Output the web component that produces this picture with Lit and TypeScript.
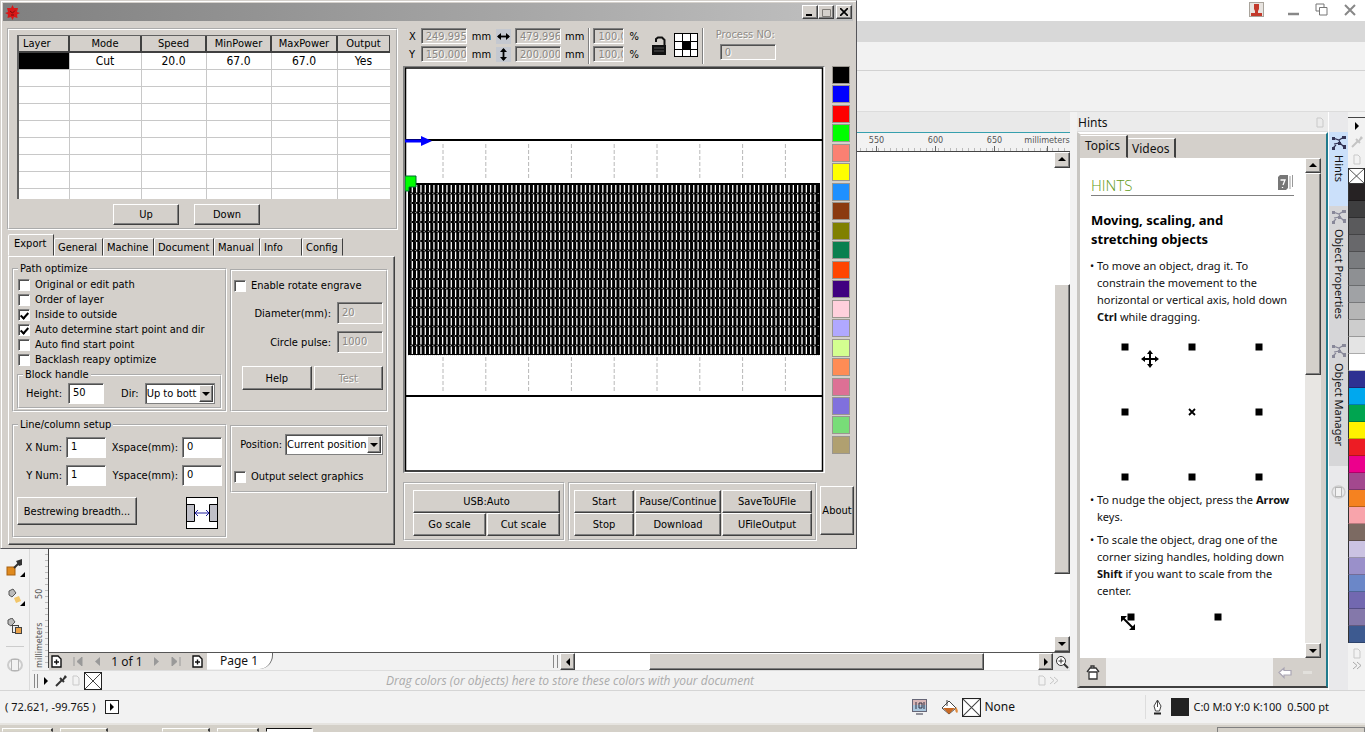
import { LitElement, html, css, svg } from "lit";
import { customElement } from "lit/decorators.js";

/* ---------- shared control styles (classic grey 3D look) ---------- */
const classic = css`
  * { box-sizing: border-box; }
  button, input, select { font: inherit; color: inherit; margin: 0; padding: 0; border-radius: 0; outline: none; }
  button { cursor: default; }
  .btn {
    background: #d4d0cb; border: 1px solid; border-color: #fff #404040 #404040 #fff;
    box-shadow: inset -1px -1px 0 #808080; display: flex; align-items: center; justify-content: center;
    white-space: nowrap;
  }
  svg { display: block; flex: none; }
`;

const arrow = (dir: "up" | "down" | "left" | "right") => {
  const d = { up: "M0 5L4 1L8 5Z", down: "M0 2L4 6L8 2Z", left: "M6 0L2 4L6 8Z", right: "M2 0L6 4L2 8Z" }[dir];
  return html`<svg width="8" height="8" viewBox="0 0 8 8"><path d=${d} fill="#000" /></svg>`;
};

const crossBox = (w: number, h: number) => html`<svg width=${w} height=${h} viewBox="0 0 18 18" preserveAspectRatio="none">
  <rect x=".5" y=".5" width="17" height="17" fill="#fff" stroke="#222" /><path d="M1 1L17 17M17 1L1 17" stroke="#444" /></svg>`;

const dropper = (c = "#333") => html`<svg width="14" height="14" viewBox="0 0 14 14">
  <path d="M2 12L8 6" stroke=${c} stroke-width="2" /><path d="M6 4L10 8" stroke=${c} stroke-width="2" />
  <path d="M8 6L11 1L13 3L9 7Z" fill=${c} /></svg>`;

const page = html`<svg width="8" height="11" viewBox="0 0 8 11"><path d="M1 1H5L7 3V10H1Z" fill="none" stroke="#c9c9c9" /></svg>`;

const addPage = html`<svg width="11" height="13" viewBox="0 0 11 13">
  <path d="M1 1H7L10 4V12H1Z" fill="#fff" stroke="#111" stroke-width="1.4" /><path d="M3 7H8M5.5 4.5V9.5" stroke="#111" stroke-width="1.4" /></svg>`;

const nodes = (c: string) => html`<svg width="16" height="16" viewBox="0 0 16 16">
  <path d="M2 3L8 5L13 2M3 9L9 8L13 12M8 5L9 8M2 13L5 10" fill="none" stroke=${c} stroke-width="1.2" />
  <path d="M1 2h3v3h-3zM11 1h4v3h-4zM7 7h3v3h-3zM12 10h3v4h-3zM1 12h3v3h-3z" fill=${c} /></svg>`;

/* ---------- laser engraver dialog ---------- */
@customElement("laser-dialog")
class LaserDialog extends LitElement {
  static styles = [classic, css`
    :host {
      display: block; width: 857px; background: #d4d0cb; color: #000;
      font: 11px/13px "DejaVu Sans Condensed", "DejaVu Sans", sans-serif;
      border: 1px solid; border-color: #d4d0cb #55555a #55555a #d4d0cb; padding: 2px 3px 3px 2px; box-shadow: inset 1px 1px 0 #fff;
    }
    .title { height: 18px; background: linear-gradient(90deg, #808080, #c0c0c0); display: flex; align-items: center; padding: 0 1px 0 2px; margin-bottom: 7px; }
    .title .logo { margin-right: auto; }
    .title .btn { width: 16px; height: 14px; }
    .title .close { margin-left: 2px; }
    .cols { display: grid; grid-template-columns: 391px 1fr; gap: 5px; padding-left: 4px; }
    fieldset { border: 2px groove #fff; margin: 0; padding: 0; min-width: 0; }
    legend { padding: 0 2px; margin-left: 4px; height: 12px; line-height: 12px; }

    .layers { height: 202px; padding: 5px 6px 3px 8px; }
    .grid { height: 164px; overflow: hidden; background: #fff; border-left: 2px solid #606060; border-top: 1px solid #606060; }
    table { border-collapse: collapse; table-layout: fixed; width: 371px; }
    th { height: 16px; background: #d4d0cb; border: solid #404040; border-width: 0 2px 2px 0; font-weight: normal; padding: 0; line-height: 14px; vertical-align: bottom; }
    th:first-child { text-align: left; padding-left: 4px; }
    td { height: 17px; border: solid #c8c8c8; border-width: 0 1px 1px 0; padding: 0; text-align: center; font-size: 12px; line-height: 14px; }
    td.ink { background: #000; }
    .move { display: flex; justify-content: center; gap: 15px; margin: 5px 34px 0 0; }
    .move .btn { width: 66px; height: 21px; }

    .tabs { display: flex; align-items: flex-end; height: 25px; margin-top: 1px; padding-left: 1px; }
    .tab { height: 18px; border: 1px solid; border-color: #fff #404040 transparent #fff; background: #d4d0cb; border-top-left-radius: 2px; text-align: left; padding: 0 0 0 3px; white-space: nowrap; }
    .tab.on { height: 22px; padding-bottom: 3px; padding-left: 5px; }
    .sheet { border: 1px solid; border-color: #fff #404040 #404040 #fff; box-shadow: inset -1px -1px 0 #808080; height: 289px;
      display: grid; grid-template-columns: 215px 158px; grid-template-rows: 149px 1fr; gap: 7px 3px; padding: 6px 7px 6px 3px; width: 387px; margin-left: 1px; }
    .sheet > fieldset { padding: 0; }
    .side { margin-top: 6px; }

    .check { display: flex; align-items: center; gap: 5px; height: 15px; white-space: nowrap; }
    .check input { appearance: none; width: 12px; height: 12px; background: #fff; border: 1px solid; border-color: #808080 #fff #fff #808080; box-shadow: inset 1px 1px 0 #505050; position: relative; flex: none; }
    .check input:checked::after { content: ""; position: absolute; left: 3px; top: 1px; width: 3px; height: 6px; border: solid #000; border-width: 0 2px 2px 0; transform: rotate(42deg); }
    .list { padding: 2px 0 0 4px; }

    .field { background: #fff; border: 1px solid; border-color: #808080 #fff #fff #808080; box-shadow: inset 1px 1px 0 #505050; padding: 0 0 2px 4px; height: 21px; min-width: 0; }
    .field:disabled { background: #d4d0cb; color: #8b8884; text-shadow: 1px 1px 0 #fff; opacity: 1; }
    .row { display: flex; align-items: center; gap: 6px; }
    .pick { position: relative; display: block; height: 21px; }
    .pick select { appearance: none; width: 100%; height: 100%; background: #fff; border: 1px solid #808080; box-shadow: inset 1px 1px 0 #505050; padding-left: 1px; }
    .pick .btn { position: absolute; right: 2px; top: 2px; bottom: 2px; width: 14px; pointer-events: none; }
    .block { margin: 2px 3px 0 3px; height: 40px; }
    .block .row { padding: 2px 0 0 7px; }
    .w36 { width: 36px; } .w70 { width: 70px; } .w46 { width: 46px; } .w31 { width: 31px; } .w98 { width: 98px; }
    .push { margin-left: 11px; }

    .rotate .list, .pos .list { padding: 7px 3px 0 2px; }
    .r { display: grid; grid-template-columns: 1fr 46px; gap: 6px; align-items: center; text-align: right; margin-top: 9px; }
    .r .field { height: 22px; }
    .r + .r { margin-top: 7px; }
    .two { display: grid; grid-template-columns: 1fr 1fr; gap: 2px; margin: 13px 0 0 8px; }
    .two .btn { height: 24px; }
    .dis { color: #908d88; text-shadow: 1px 1px 0 #fff; }
    .pos { height: 68px; }
    .pos .row { justify-content: flex-end; gap: 3px; }
    .pos .check { margin-top: 14px; }
    .nums { display: grid; grid-template-columns: 48px 40px 68px 40px; gap: 7px 4px; align-items: center; text-align: right; padding: 6px 0 0 0; justify-content: start; }
    .spread { display: flex; justify-content: space-between; padding: 11px 7px 0 3px; }
    .spread .btn { width: 120px; height: 28px; }

    .coords { display: flex; height: 38px; align-items: flex-start; padding-left: 6px; }
    .xy { display: grid; grid-template-columns: auto auto auto; gap: 2px 5px; align-items: center; }
    .xy.pct { grid-template-columns: auto auto; }
    .xy .field, .proc .field { height: 16px; padding-bottom: 0; }
    .sep { width: 2px; height: 36px; border-left: 1px solid #808080; border-right: 1px solid #fff; margin: 0 3px 0 4px; }
    .gap { margin-left: 5px; }
    .xy.gap { column-gap: 4px; }
    .icons { display: flex; gap: 6px; padding: 5px 0 0 12px; }
    .proc { padding-left: 9px; }
    .proc label { display: block; white-space: nowrap; margin-bottom: 3px; }
    .proc .field { width: 56px; margin-left: 4px; display: block; }
    .stage { display: flex; gap: 7px; }
    .view { width: 422px; height: 407px; border: 1px solid; border-color: #808080 #fff #fff #808080; border-left-width: 2px; background: #fff; }
    .inks { display: flex; flex-direction: column; justify-content: space-between; height: 388px; }
    .ink-btn { width: 18px; height: 18px; border: 1px solid #9a968f; }
    .cmds { display: flex; gap: 3px; margin-top: 9px; align-items: flex-start; }
    .cmds fieldset { height: 59px; padding: 6px 3px 0 8px; }
    .cmds .ctl { padding-left: 4px; }
    .usb { display: grid; grid-template-columns: 73px 73px; gap: 0 1px; }
    .run { display: grid; grid-template-columns: 60px 86px 90px; gap: 0 1px; }
    .cmds fieldset .btn { height: 23px; }
    .usb .wide { grid-column: 1 / 3; }
    .about { width: 34px; height: 49px; margin-top: 4px; }
  `];

  check(label: string, on = false) {
    return html`<label class="check"><input type="checkbox" ?checked=${on} />${label}</label>`;
  }

  render() {
    const heads = ["Layer", "Mode", "Speed", "MinPower", "MaxPower", "Output"];
    const widths = [50, 72, 65, 65, 66, 53];
    const tabs: [string, number][] = [["Export", 46], ["General", 49], ["Machine", 51], ["Document", 60], ["Manual", 46], ["Info", 42], ["Config", 41]];
    const inks = ["#000", "#00f", "#f00", "#0f0", "#fa8072", "#ff0", "#1e90ff", "#8b3a10", "#808000", "#0a8050", "#ff4500", "#400080", "#ffd0dc", "#b0a8ff", "#d4ff90", "#ff8c55", "#dd7095", "#8070dd", "#78dd78", "#b0a070"];
    return html`
      <div class="title">
        <svg class="logo" width="15" height="15" viewBox="0 0 15 15"><path d="M7.500 0L9 3L13 3L12 7L15 8L12 9.500L12.500 13L9 12L7.500 15L6 12L2.500 13L3 9.500L0 8L3 7L2 3L6 3Z" fill="#d81818" /><path d="M5 6L7.500 8L10 5.500M6 10L9 10" stroke="#7a0a0a" fill="none" /></svg>
        <button class="btn" aria-label="Minimize"><svg width="8" height="8"><path d="M0 7H6" stroke="#000" stroke-width="2" /></svg></button>
        <button class="btn" aria-label="Maximize"><svg width="9" height="9"><path d="M.5 1.500H8.500V8.500H.5Z" fill="none" stroke="#807d78" /></svg></button>
        <button class="btn close" aria-label="Close"><svg width="8" height="8"><path d="M0 0L8 8M8 0L0 8" stroke="#000" stroke-width="1.700" /></svg></button>
      </div>
      <div class="cols">
        <div>
          <fieldset class="layers">
            <div class="grid"><table>
              <colgroup>${widths.map(w => html`<col width=${w} />`)}</colgroup>
              <thead><tr>${heads.map(h => html`<th>${h}</th>`)}</tr></thead>
              <tbody>
                <tr><td class="ink"></td>${["Cut", "20.0", "67.0", "67.0", "Yes"].map(v => html`<td>${v}</td>`)}</tr>
                ${Array.from({ length: 8 }, () => html`<tr>${heads.map(() => html`<td></td>`)}</tr>`)}
              </tbody></table></div>
            <div class="move"><button class="btn">Up</button><button class="btn">Down</button></div>
          </fieldset>
          <div class="tabs" role="tablist">${tabs.map(([t, w], i) => html`<button role="tab" class="tab ${i ? "" : "on"}" style="width:${w}px">${t}</button>`)}</div>
          <div class="sheet">
            <fieldset><legend>Path optimize</legend>
              <div class="list">
                ${this.check("Original or edit path")}${this.check("Order of layer")}${this.check("Inside to outside", true)}
                ${this.check("Auto determine start point and dir", true)}${this.check("Auto find start point")}${this.check("Backlash reapy optimize")}
              </div>
              <fieldset class="block"><legend>Block handle</legend>
                <div class="row"><label for="bh">Height:</label><input class="field w36" id="bh" value="50" />
                  <label class="push" for="dir">Dir:</label>
                  <span class="pick w70"><select id="dir"><option>Up to bott</option></select><span class="btn">${arrow("down")}</span></span></div>
              </fieldset>
            </fieldset>
            <fieldset class="rotate side"><div class="list">${this.check("Enable rotate engrave")}
              <div class="r"><label for="dia">Diameter(mm):</label><input class="field" id="dia" value="20" disabled /></div>
              <div class="r"><label for="cp">Circle pulse:</label><input class="field" id="cp" value="1000" disabled /></div>
              <div class="two"><button class="btn">Help</button><button class="btn dis">Test</button></div></div>
            </fieldset>
            <fieldset><legend>Line/column setup</legend>
              <div class="nums">
                <label for="xn">X Num:</label><input class="field" id="xn" value="1" /><label for="xs">Xspace(mm):</label><input class="field" id="xs" value="0" />
                <label for="yn">Y Num:</label><input class="field" id="yn" value="1" /><label for="ys">Yspace(mm):</label><input class="field" id="ys" value="0" />
              </div>
              <div class="spread"><button class="btn">Bestrewing breadth...</button>
                <svg width="32" height="32" viewBox="0 0 32 32"><rect x=".5" y=".5" width="31" height="31" fill="#fff" stroke="#000" />
                  <path d="M1 7.500H8.500V24.500H1M31 7.500H23.500V24.500H31" fill="#c0c0c8" stroke="#000" /><path d="M9 16H23M12 13L9 16L12 19M20 13L23 16L20 19" fill="none" stroke="#2020a0" /></svg></div>
            </fieldset>
            <fieldset class="pos side"><div class="list">
              <div class="row"><label for="ps">Position:</label><span class="pick w98"><select id="ps"><option>Current position</option></select><span class="btn">${arrow("down")}</span></span></div>
              ${this.check("Output select graphics")}</div>
            </fieldset>
          </div>
        </div>
        <div>
          <div class="coords">
            <div class="xy">
              <label for="cx">X</label><input class="field w46" id="cx" value="249.995" disabled /><span>mm</span>
              <label for="cy">Y</label><input class="field w46" id="cy" value="150.000" disabled /><span>mm</span>
            </div>
            <div class="xy gap">
              <svg width="15" height="15" viewBox="0 0 15 15"><path d="M0 0H15V15H0Z" fill="#c4c8d0" /><path d="M2 7.500H13" stroke="#000" stroke-width="1.800" /><path d="M1 7.500L5 4V11ZM14 7.500L10 4V11Z" fill="#000" /></svg>
              <input class="field w46" aria-label="Width" value="479.996" disabled /><span>mm</span>
              <svg width="15" height="15" viewBox="0 0 15 15"><path d="M0 0H15V15H0Z" fill="#c4c8d0" /><path d="M7.500 2V13" stroke="#000" stroke-width="1.800" /><path d="M7.500 1L4 5H11ZM7.500 14L4 10H11Z" fill="#000" /></svg>
              <input class="field w46" aria-label="Height" value="200.000" disabled /><span>mm</span>
            </div>
            <div class="sep"></div>
            <div class="xy pct">
              <input class="field w31" aria-label="Scale X" value="100.0" disabled /><span>%</span>
              <input class="field w31" aria-label="Scale Y" value="100.0" disabled /><span>%</span>
            </div>
            <div class="icons">
              <svg width="17" height="24" viewBox="0 0 17 24"><path d="M5 9V6L7 4.500H11L13.500 7V12" fill="none" stroke="#111" stroke-width="2" /><rect x="1" y="12" width="14" height="10" fill="#111" /><path d="M3 15H13M3 18H13" stroke="#555" /></svg>
              <svg width="24" height="24" viewBox="0 0 24 24"><rect x=".5" y=".5" width="23" height="23" fill="#fff" stroke="#000" /><path d="M8.500 0V24M16.500 0V24M0 8.500H24M0 16.500H24" stroke="#000" /><rect x="9" y="9" width="7" height="7" fill="#000" /></svg>
            </div>
            <div class="sep"></div>
            <div class="proc dis"><label for="pn">Process NO:</label><input class="field" id="pn" value="0" disabled /></div>
          </div>
          <div class="stage">
            <div class="view">${this.canvas()}</div>
            <div class="inks">${inks.map(c => html`<button class="ink-btn" aria-label="Layer colour" style="background:${c}"></button>`)}</div>
          </div>
          <div class="cmds">
            <fieldset><div class="usb"><button class="btn wide">USB:Auto</button><button class="btn">Go scale</button><button class="btn">Cut scale</button></div></fieldset>
            <fieldset class="ctl"><div class="run"><button class="btn">Start</button><button class="btn">Pause/Continue</button><button class="btn">SaveToUFile</button>
              <button class="btn">Stop</button><button class="btn">Download</button><button class="btn">UFileOutput</button></div></fieldset>
            <button class="btn about">About</button>
          </div>
        </div>
      </div>`;
  }

  canvas() {
    const xs = Array.from({ length: 9 }, (_, i) => 38 + i * 42.8);
    /* cut sheet: slits, one column every 4.33 units and one row every 9.5 */
    const slits = Array.from({ length: 94 }, (_, i) => `M${(7.3 + i * 4.33).toFixed(2)} 118V287`).join("");
    const seams = Array.from({ length: 17 }, (_, i) => `M4 ${126.5 + i * 9.5}H414`).join("");
    return html`<svg width="419" height="405" viewBox="0 0 419 405">
      <rect x=".5" y="1" width="417" height="403" fill="#fff" stroke="#000" stroke-width="1.500" />
      ${xs.map(x => svg`<path d="M${x} 77V111M${x} 290V325" stroke="#b8b8b8" stroke-dasharray="4 2" />`)}
      <path d="M0 73H418M0 329H418" stroke="#000" stroke-width="2" />
      <path d="M3 288H414" stroke="#bbb" stroke-dasharray="1 1" />
      <rect x="3" y="117" width="411" height="171" fill="#000" />
      <path d=${slits} stroke="#fff" stroke-width="1.300" stroke-dasharray="7.500 2" />
      <path d=${seams} stroke="#8a8a8a" stroke-dasharray="1.500 2.830" stroke-dashoffset="-1.500" />
      <rect x="3.500" y="116.500" width="411" height="171" fill="none" stroke="#000" />
      <path d="M0 74H18" stroke="#00f" stroke-width="3" /><path d="M16 69L27 74L16 79Z" fill="#00f" />
      <path d="M0 109H11V120H4V124H0Z" fill="#0f0" stroke="#063" stroke-width="1" />
    </svg>`;
  }
}

/* ---------- hints docker ---------- */
@customElement("hints-panel")
class HintsPanel extends LitElement {
  static styles = [classic, css`
    :host { display: flex; flex-direction: column; font: 11px/17px "Noto Sans", sans-serif; color: #111; min-height: 0; }
    .head { height: 20px; background: #ebebeb; font: 12px/22px "Noto Sans", sans-serif; padding: 2px 4px 0 1px; display: flex; justify-content: space-between; align-items: center; border-bottom: 1px solid #ddd; }
    .frame { flex: 1; min-height: 0; display: flex; flex-direction: column; background: #d4d0cb; border: solid; border-width: 2px 2px 2px 3px; border-color: #fff #207a8c #404040 #c8c6c2; margin-bottom: 2px; }
    .tabs { display: flex; height: 24px; align-items: flex-end; font: 12px/16px "Noto Sans", sans-serif; }
    .tab { background: #d4d0cb; border: 1px solid; border-color: #fff #404040 transparent transparent; border-right-width: 2px; height: 20px; padding: 1px 4px 0 3px; }
    .tab.on { height: 23px; padding: 0 6px 1px 4px; }
    .body { flex: 1; min-height: 0; display: flex; margin-right: 5px; }
    .doc { flex: 1; background: #fff; padding: 17px 11px 0; overflow: hidden; }
    .cap { display: flex; justify-content: space-between; height: 21px; border-bottom: 1px solid #808080; font: 300 15px/20px "Open Sans", "Noto Sans", sans-serif; color: #5f9a14; }
    h2 { font: bold 13px/19px "Noto Sans", sans-serif; margin: 15px 0 8px; color: #000; max-width: 170px; }
    ul { margin: 0; padding: 0; list-style: none; }
    li { padding-left: 6px; position: relative; margin-bottom: 6px; }
    li::before { content: "•"; position: absolute; left: -1px; }
    .bar { width: 16px; background: #e8e6e3; display: flex; flex-direction: column; }
    .bar .btn { height: 15px; }
    .thumb { flex: 198; } .rest { flex: 266; }
    .foot { height: 28px; margin-right: 5px; background: #f2f2f2; display: flex; justify-content: space-between; }
    .foot button { border: 0; background: #d4d0cb; width: 26px; display: flex; align-items: center; justify-content: center; }
    .foot .nav { width: 48px; justify-content: flex-start; padding-left: 5px; }
  `];
  render() {
    const sq = (x: number, y: number) => svg`<rect x=${x - 3.5} y=${y - 3.5} width="7" height="7" fill="#000" />`;
    return html`
      <div class="head"><span>Hints</span>${page}</div>
      <div class="frame">
        <div class="tabs" role="tablist"><button class="tab on" role="tab">Topics</button><button class="tab" role="tab">Videos</button></div>
        <div class="body">
          <div class="doc">
            <div class="cap"><span>HINTS</span>
              <svg width="17" height="16" viewBox="0 0 17 16"><path d="M1 2L3 0H11V13L9 15H1Z" fill="#777" /><path d="M3.500 5H8L6 10M5.500 12V13" fill="none" stroke="#fff" stroke-width="1.300" /><path d="M13 1V14M15.500 0V12" stroke="#999" /></svg></div>
            <h2>Moving, scaling, and stretching objects</h2>
            <ul>
              <li>To move an object, drag it. To constrain the movement to the horizontal or vertical axis, hold down <b>Ctrl</b> while dragging.</li>
            </ul>
            <svg width="202" height="160" viewBox="0 0 202 160">
              ${[34, 101, 168].map(x => [16, 81, 146].map(y => (x === 101 && y === 81 ? "" : sq(x, y))))}
              <path d="M98 78L104 84M104 78L98 84" stroke="#000" stroke-width="1.800" />
              <path d="M59 21V35M52 28H66" stroke="#000" stroke-width="2" /><path d="M59 19L62 23H56ZM59 37L62 33H56ZM50 28L54 25V31ZM68 28L64 25V31Z" />
            </svg>
            <ul>
              <li>To nudge the object, press the <b>Arrow</b> keys.</li>
              <li>To scale the object, drag one of the corner sizing handles, holding down <b>Shift</b> if you want to scale from the center.</li>
            </ul>
            <svg width="202" height="30" viewBox="0 0 202 30">${sq(40, 12)}${sq(127, 12)}
              <path d="M32 13L42 23" stroke="#000" stroke-width="2" /><path d="M30 11H36L30 17ZM44 25H38L44 19Z" /></svg>
          </div>
          <div class="bar"><button class="btn" aria-label="Scroll up">${arrow("up")}</button><div class="btn thumb"></div><div class="rest"></div><button class="btn" aria-label="Scroll down">${arrow("down")}</button></div>
        </div>
        <div class="foot">
          <button aria-label="Home"><svg width="14" height="15" viewBox="0 0 14 15"><path d="M1 7L4 3H10L13 7M3 7V14H11V7ZM5 3V1H8V3" fill="#fff" stroke="#333" stroke-width="1.300" /></svg></button>
          <button class="nav" aria-label="Back"><svg width="36" height="13" viewBox="0 0 36 13"><path d="M1 6.500L6 2V4.500H13V9H6V11.500Z" fill="#fff" stroke="#aaa6b4" stroke-width="1.200" /><path d="M25 5H34V8H25Z" fill="#e2e0dc" /></svg></button>
        </div>
      </div>`;
  }
}

/* ---------- application shell ---------- */
@customElement("app-root")
class AppRoot extends LitElement {
  static styles = [classic, css`
    :host { display: flex; flex-direction: column; height: 100vh; min-height: 600px; overflow: hidden; position: relative; background: #f2f2f2; color: #111; font: 12px/16px "Noto Sans", sans-serif; }
    .caption { height: 21px; background: #fff; display: flex; justify-content: flex-end; align-items: center; gap: 16px; padding: 0 9px 2px 0; }
    .caption button { border: 0; background: none; }
    .caption .user { margin-right: 8px; }
    .menu { height: 21px; background: #d8d8d8; }
    .strip { height: 29px; border-bottom: 1px solid #d2d2d2; }
    .props { height: 41px; border-bottom: 1px solid #dcdcdc; }
    .work { flex: 1; min-height: 0; display: flex; }
    .tools { width: 30px; border-right: 1px solid #dadada; display: flex; flex-direction: column; justify-content: flex-end; align-items: center; gap: 10px; padding-bottom: 17px; }
    .tools hr { width: 18px; border: 0; border-top: 1px solid #ccc; margin: 0; }
    .center { flex: 1; min-width: 0; display: flex; flex-direction: column; margin: 0 7px 0 2px; }
    .docs { height: 21px; background: #e9e9e9; border-bottom: 1px solid #36a0ae; }
    .ruler { height: 19px; border-bottom: 1px solid #444; display: flex; justify-content: flex-end; font: 9px/15px "DejaVu Sans Condensed", sans-serif; color: #555; background: repeating-linear-gradient(90deg, #bbb 0 1px, transparent 1px 6px) 0 100% / 100% 3px no-repeat; }
    .ruler span { width: 59px; text-align: center; background: linear-gradient(#666, #666) 50% 100% / 1px 5px no-repeat; }
    .ruler .unit { width: 46px; }
    .mid { flex: 1; min-height: 0; display: flex; background: #fff; }
    .vruler { width: 17px; margin-bottom: -16px; background: #f2f2f2 repeating-linear-gradient(0deg, #bbb 0 1px, transparent 1px 6px) 0 0 / 3px 100% no-repeat; border-left: 1px solid #444; writing-mode: vertical-rl; transform: rotate(180deg); font: 9px/14px "DejaVu Sans Condensed", sans-serif; color: #555; display: flex; gap: 24px; }
    .sheet { flex: 1; }
    .vbar { width: 16px; display: flex; flex-direction: column; }
    .vbar .btn[aria-label] { height: 16px; }
    .a { flex: 117; } .b { flex: 290; } .c { flex: 63; }
    .nav { height: 18px; display: flex; border-top: 1px solid #555; margin-left: 17px; }
    .pages { background: #d4d0cb; display: flex; align-items: center; padding: 0 4px 0 2px; width: 158px; justify-content: space-between; }
    .pages button { border: 0; background: none; }
    .ptab { background: #fff; width: 66px; border: 0; text-align: left; padding-left: 13px; border-bottom-right-radius: 14px; border-right: 1px solid #666; height: 16px; line-height: 14px; }
    .split { flex: 283; display: flex; justify-content: flex-end; padding-right: 2px; }
    .grip { width: 5px; border: solid #888; border-width: 0 1px; margin: 2px 0; }
    .hbar { flex: 489; display: flex; background: #fff; }
    .hbar .btn[aria-label] { width: 15px; }
    .ha { flex: 74; } .hb { flex: 334; } .hc { flex: 54; }
    .zoom { width: 17px; border: 0; background: #e6e6e6; display: flex; align-items: center; justify-content: center; }
    .tray { height: 20px; display: flex; align-items: center; gap: 4px; padding: 0 12px 0 2px; border-top: 1px solid #ddd; }
    .tray .hint { flex: 1; text-align: center; font: italic 12px/16px "Open Sans", "Noto Sans", sans-serif; color: #aaa; }
    .tray .grip { height: 14px; width: 4px; }
    hints-panel { width: 251px; }
    .dock { width: 20px; display: flex; flex-direction: column; padding: 20px 0 0; background: #e9e9eb; border-left: 1px solid #fff; }
    .dtab { writing-mode: vertical-rl; border: 0; background: #d6d6d8; padding: 3px 0 0; display: flex; align-items: center; gap: 4px; width: 19px; text-align: left; font-size: 11px; }
    .dtab.on { background: #cbe0fa; height: 74px; }
    .dtab.p { height: 134px; } .dtab.m { height: 126px; }
    .dock svg.end { margin: 18px 2px; }
    .pal { width: 17px; display: flex; flex-direction: column; align-items: stretch; padding-top: 5px; }
    .ptools { height: 51px; display: flex; flex-direction: column; gap: 5px; align-items: center; border-top: 1px solid #444; padding-top: 4px; }
    .sw { height: 17px; border: 0; border-left: 1px solid #333; border-bottom: 1px solid rgba(0, 0, 0, 0.25); }
    .more { display: flex; flex-direction: column; align-items: center; gap: 2px; padding-top: 5px; }
    .status { height: 33px; border-top: 1px solid #d5d5d5; display: flex; align-items: center; padding: 0 36px 0 5px; gap: 4px; font-size: 11px; }
    .status .ps { padding: 0; background: #fff; border: 1px solid #222; width: 14px; height: 14px; display: flex; align-items: center; justify-content: center; margin: 0 auto 0 5px; }
    .fill { display: flex; align-items: center; gap: 3px; width: 229px; font-size: 12px; }
    .fill .tint { margin-right: 11px; }
    .line { display: flex; align-items: center; gap: 4px; border-left: 1px solid #ddd; padding-left: 6px; height: 24px; white-space: pre; }
    .chip { width: 18px; height: 18px; background: #222; margin-left: 4px; }
    .task { height: 9px; background: #d4d0c8; border-top: 2px solid #e6e4e0; display: flex; gap: 7px; align-items: flex-end; padding-left: 2px; }
    .task button { height: 4px; border: 1px solid; border-color: #fff #404040 #d4d0c8 #fff; border-right-width: 2px; background: #d8d5c8; }
    .task .space { width: 40px; }
    .task .on { border-color: #111 #fff #fff #111; background: #fff; }
    .task .clock { margin-left: auto; border: 1px solid #808080; border-bottom: 0; height: 5px; width: 148px; }
    laser-dialog { position: absolute; left: 0; top: 0; }
  `];

  render() {
    const swatches = ["#262223", "#3e3e3f", "#5a5a5c", "#68686b", "#7a7c7f", "#8e9093", "#a0a2a5", "#b6b6b6", "#cdcdcd", "#e4e4e4", "#ffffff",
      "#2e3192", "#00a8ee", "#00a550", "#fff200", "#ed1c24", "#ec008c", "#a3488e", "#f58220", "#f8a4ab", "#7c6a62", "#cbc3e2", "#9a90ca", "#6b87c8", "#7268b0", "#8478aa", "#3d5a90"];
    const task = (w: number) => html`<button aria-label="Task" style="width:${w}px"></button>`;
    return html`
      <div class="caption">
        <svg class="user" width="15" height="15" viewBox="0 0 15 15"><rect x=".5" y=".5" width="14" height="14" fill="#e8e4e0" stroke="#a9a49c" /><path d="M5 2H10V7L9 9V11H13V14H2V11H6V9L5 7Z" fill="#c3392b" /></svg>
        <button aria-label="Minimize"><svg width="11" height="12"><path d="M0 10H11" stroke="#888" stroke-width="2.500" /></svg></button>
        <button aria-label="Restore"><svg width="13" height="13"><path d="M4 8H1V1H9V4M4.500 4.500H12V12H4.500Z" fill="none" stroke="#777" /></svg></button>
        <button aria-label="Close"><svg width="12" height="12"><path d="M1 1L11 11M11 1L1 11" stroke="#888" stroke-width="2" /></svg></button>
      </div>
      <div class="menu"></div><div class="strip"></div><div class="props"></div>
      <div class="work">
        <div class="tools">
          <svg width="20" height="20" viewBox="0 0 20 20"><rect x="2" y="9" width="8" height="8" fill="#e08a1e" stroke="#a86010" /><path d="M9 10L15 4" stroke="#333" stroke-width="2" /><path d="M11 3L17 1V7L14 8Z" fill="#333" /><path d="M20 14V19H15Z" /></svg>
          <svg width="20" height="20" viewBox="0 0 20 20"><path d="M4 3L8 1L11 5L7 9L4 7Z" fill="#bbb" stroke="#555" /><path d="M9 10L14 8L16 13L11 15Z" fill="#f2c66a" /><path d="M20 13V18H15Z" /></svg>
          <svg width="20" height="18" viewBox="0 0 20 18"><path d="M3 2L7 0L10 4L6 8L3 6Z" fill="#bbb" stroke="#555" /><rect x="7.500" y="7.500" width="6" height="7" fill="#eee" stroke="#444" /><rect x="10.500" y="9.500" width="6" height="6" fill="#e9a24a" stroke="#444" /></svg>
          <hr />
          <svg width="18" height="16" viewBox="0 0 18 16"><ellipse cx="9" cy="8" rx="7" ry="6" fill="none" stroke="#ccc" stroke-width="2" /><rect x="5.500" y="2.500" width="7" height="11" fill="#f2f2f2" stroke="#b5b5b5" /></svg>
        </div>
        <div class="center">
          <div class="docs"></div>
          <div class="ruler"><span>550</span><span>600</span><span>650</span><span class="unit">millimeters</span></div>
          <div class="mid">
            <div class="vruler"><span>millimeters</span><span>50</span></div>
            <div class="sheet"></div>
            <div class="vbar"><button class="btn" aria-label="Scroll up">${arrow("up")}</button><div class="a"></div><div class="btn b"></div><div class="c"></div><button class="btn" aria-label="Scroll down">${arrow("down")}</button></div>
          </div>
          <div class="nav">
            <div class="pages">
              <button aria-label="Add page before">${addPage}</button>
              <button aria-label="First page"><svg width="10" height="9"><path d="M1 0V9M9 0V9L4 4.500Z" fill="#999" stroke="#999" /></svg></button>
              <button aria-label="Previous page"><svg width="6" height="9"><path d="M6 0V9L1 4.500Z" fill="#999" /></svg></button>
              <span>1 of 1</span>
              <button aria-label="Next page"><svg width="6" height="9"><path d="M0 0V9L5 4.500Z" fill="#999" /></svg></button>
              <button aria-label="Last page"><svg width="10" height="9"><path d="M9 0V9M1 0V9L6 4.500Z" fill="#999" stroke="#999" /></svg></button>
              <button aria-label="Add page after">${addPage}</button>
            </div>
            <button class="ptab">Page 1</button>
            <div class="split"><div class="grip"></div></div>
            <div class="hbar"><button class="btn" aria-label="Scroll left">${arrow("left")}</button><div class="ha"></div><div class="btn hb"></div><div class="hc"></div><button class="btn" aria-label="Scroll right">${arrow("right")}</button></div>
            <button class="zoom" aria-label="Zoom"><svg width="14" height="14" viewBox="0 0 14 14"><circle cx="6" cy="6" r="4.500" fill="#fff" stroke="#333" /><path d="M3.500 6H8.500M6 3.500V8.500" stroke="#333" /><path d="M9 9L13 13" stroke="#333" stroke-width="2" /></svg></button>
          </div>
          <div class="tray"><div class="grip"></div>${arrow("right")}${dropper()}${page}${crossBox(18, 18)}
            <span class="hint">Drag colors (or objects) here to store these colors with your document</span>
            ${page}<svg width="8" height="9"><path d="M0 1L4 4.500L0 8M4 1L8 4.500L4 8" fill="none" stroke="#c4c4c4" /></svg></div>
        </div>
        <hints-panel></hints-panel>
        <div class="dock">
          <button class="dtab on">${nodes("#335")}Hints</button>
          <button class="dtab p">${nodes("#889")}Object Properties</button>
          <button class="dtab m">${nodes("#889")}Object Manager</button>
          <svg class="end" width="15" height="16" viewBox="0 0 15 16"><ellipse cx="7.500" cy="8" rx="6.500" ry="6" fill="none" stroke="#ccc" stroke-width="1.500" /><rect x="4.500" y="3.500" width="6" height="9" fill="#f2f2f2" stroke="#b5b5b5" /></svg>
        </div>
        <div class="pal">
          <div class="ptools">${arrow("right")}${dropper("#c4c4c4")}${page}</div>
          ${crossBox(17, 16)}
          ${swatches.map(c => html`<button class="sw" aria-label="Colour" style="background:${c}"></button>`)}
          <div class="more">${page}<svg width="10" height="9"><path d="M1 1L5 4.500L1 8M5 1L9 4.500L5 8" fill="none" stroke="#aaa" /></svg></div>
        </div>
      </div>
      <div class="status">
        <span>( 72.621, -99.765 )</span><button class="ps" aria-label="Options">${arrow("right")}</button>
        <div class="fill">
          <svg class="tint" width="15" height="16" viewBox="0 0 15 16"><rect x=".5" y=".5" width="14" height="12" fill="#d9b7b7" stroke="#667" /><rect x="1" y="6" width="13" height="6" fill="#a9c6dc" /><path d="M4 3V10M7 4H10V9H7ZM12 3V10M4 15H11" fill="none" stroke="#334" /></svg>
          <svg width="18" height="17" viewBox="0 0 18 17"><path d="M1 9L8 2L15 9L8 15Z" fill="#fff" stroke="#444" /><path d="M2 9H14L8 15Z" fill="#c96a24" /><path d="M6 1V7" stroke="#444" /><path d="M15 8Q18 12 16 14Q13 12 15 8Z" fill="#e08a3c" /></svg>
          ${crossBox(19, 19)}<span>None</span>
        </div>
        <div class="line">
          <svg width="11" height="17" viewBox="0 0 11 17"><path d="M5.500 1L9 7L7.500 12H3.500L2 7Z" fill="#fff" stroke="#444" /><path d="M5.500 1V8" stroke="#444" /><path d="M2 14.500H9" stroke="#222" stroke-width="2" /></svg>
          <span class="chip"></span><span>C:0 M:0 Y:0 K:100  0.500 pt</span>
        </div>
      </div>
      <div class="task">${task(51)}${task(48)}<span class="space"></span>${task(48)}${task(42)}<button class="on" aria-label="Active task" style="width:47px"></button><div class="clock"></div></div>
      <laser-dialog></laser-dialog>`;
  }
}
